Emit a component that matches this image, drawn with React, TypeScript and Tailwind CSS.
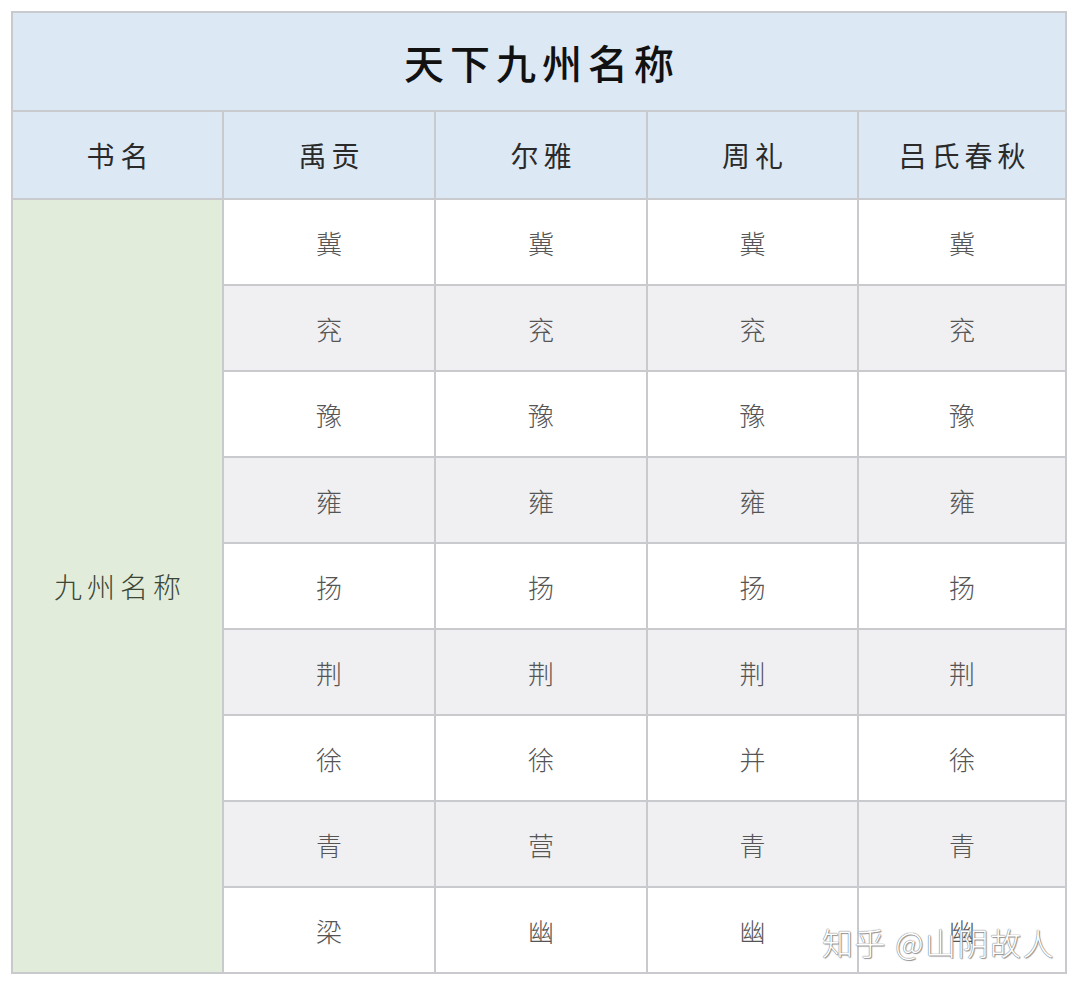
import React from "react";

const rows: string[][] = [
  ["冀", "冀", "冀", "冀"],
  ["兖", "兖", "兖", "兖"],
  ["豫", "豫", "豫", "豫"],
  ["雍", "雍", "雍", "雍"],
  ["扬", "扬", "扬", "扬"],
  ["荆", "荆", "荆", "荆"],
  ["徐", "徐", "并", "徐"],
  ["青", "营", "青", "青"],
  ["梁", "幽", "幽", "幽"],
];

const headers = ["禹贡", "尔雅", "周礼", "吕氏春秋"];

export default function App() {
  const font = "font-['Noto_Sans_CJK_SC','Noto_Sans',sans-serif]";
  return (
    <div className={`w-[1080px] h-[987px] bg-white pt-[11px] pl-[11px] relative ${font}`}>
      <div
        className="w-[1056px] grid gap-[2px] p-[2px] bg-[#c8cacd]"
        style={{
          gridTemplateColumns: "209px 210px 210px 209px 1fr",
          gridTemplateRows: "97px 86px repeat(9, 84px)",
        }}
      >
        <div className="col-span-5 bg-[#dce8f4] flex items-center justify-center text-[40px] font-medium text-[#111] tracking-[6px] pl-[6px]">
          天下九州名称
        </div>
        <div className="bg-[#dce8f4] flex items-center justify-center text-[28px] text-[#2a2a2a] tracking-[6px] pl-[6px]">
          书名
        </div>
        {headers.map((h, i) => (
          <div
            key={i}
            className="bg-[#dce8f4] flex items-center justify-center text-[28px] text-[#2a2a2a] tracking-[5px] pl-[5px]"
          >
            {h}
          </div>
        ))}
        <div
          className="bg-[#e2ecda] flex items-center justify-center text-[28px] font-light text-[#3b4636] tracking-[5px] pl-[5px]"
          style={{ gridColumn: "1", gridRow: "3 / span 9" }}
        >
          九州名称
        </div>
        {rows.map((r, ri) =>
          r.map((c, ci) => (
            <div
              key={`${ri}-${ci}`}
              className={`${ri % 2 === 1 ? "bg-[#f0f0f2]" : "bg-white"} flex items-center justify-center text-[26px] font-light text-[#555]`}
              style={{ gridColumn: String(ci + 2), gridRow: String(ri + 3) }}
            >
              {c}
            </div>
          ))
        )}
      </div>
      <div className="absolute left-[822px] top-[919px] text-[31px] text-white font-light tracking-[1.5px] [text-shadow:0_0_1px_#777,0_0_1px_#777,1px_1px_1px_#999] whitespace-nowrap">
        知乎 @山阴故人
      </div>
    </div>
  );
}
